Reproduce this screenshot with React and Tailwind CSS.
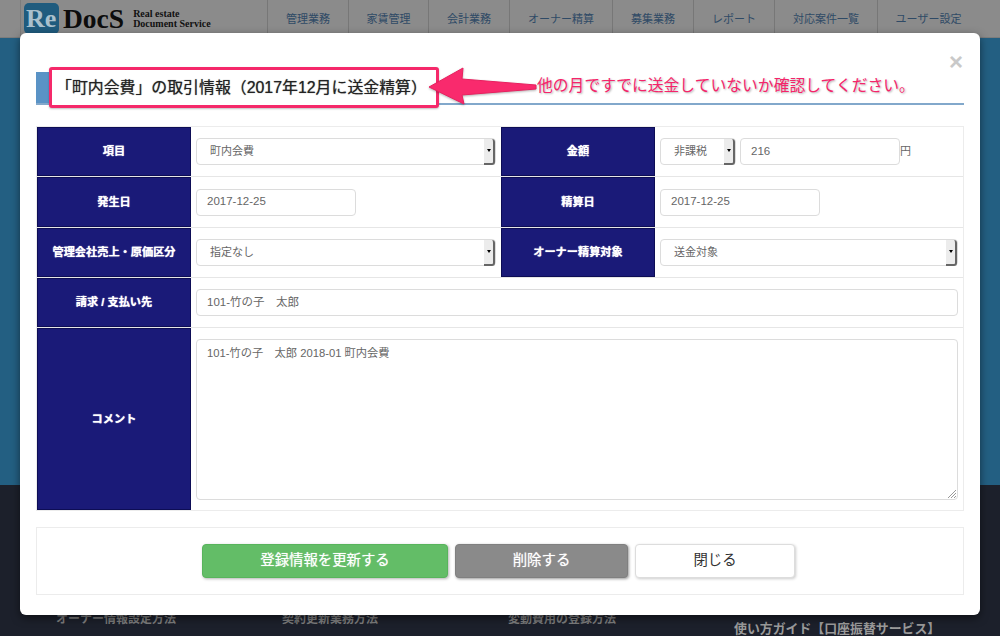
import React from 'react';

const font = { jp: "font-['Liberation_Sans','Noto_Sans_CJK_JP',sans-serif]" };

const navItems = [
  { label: '管理業務', w: 'w-[81px]' },
  { label: '家賃管理', w: 'w-[80px]' },
  { label: '会計業務', w: 'w-[81px]' },
  { label: 'オーナー精算', w: 'w-[103px]' },
  { label: '募集業務', w: 'w-[81px]' },
  { label: 'レポート', w: 'w-[81px]' },
  { label: '対応案件一覧', w: 'w-[103px]' },
  { label: 'ユーザー設定', w: 'w-[102px]' },
];

const footerCols = ['オーナー情報設定方法', '契約更新業務方法', '変動費用の登録方法'];

const Label = ({ children, w = 'w-[154px]' }) => (
  <div className={`${w} shrink-0 h-full bg-[#1a1a78] border border-[#0d0d55] flex items-center justify-center text-white text-[11.2px] font-bold [text-shadow:0_0_1px_#fff]`}>
    {children}
  </div>
);

const Field = ({ children, className = '' }) => (
  <div className={`h-[27px] bg-white border border-[#dcdcdc] rounded-[4px] flex items-center px-[10px] text-[11.5px] text-[#666] ${className}`}>
    {children}
  </div>
);

const Select = ({ children, className = '' }) => (
  <div className={`h-[27px] bg-white border border-[#dcdcdc] rounded-[4px] flex items-center justify-between pl-[13px] text-[11px] text-[#666] ${className}`}>
    <span>{children}</span>
    <span className="w-[11px] h-[26px] bg-[#ececec] border-r-2 border-b-2 border-[#666] rounded-r-[3px] flex items-center justify-center">
      <span className="w-0 h-0 border-x-[2.5px] border-x-transparent border-t-[3px] border-t-black" />
    </span>
  </div>
);

const Row = ({ children, className = '' }) => (
  <div className={`flex items-center border-b border-[#e6e6e6] ${className}`}>{children}</div>
);

const Cell = ({ children, className = '' }) => (
  <div className={`flex items-center pl-[5px] pr-[5px] ${className}`}>{children}</div>
);

const App = () => {
  return (
    <div className={`relative w-[1000px] h-[636px] overflow-hidden flex flex-col ${font.jp}`}>
      {/* page behind the dialog */}
      <header className="h-[38px] shrink-0 bg-[#8b8b8b] flex items-stretch pl-[20px] border-b border-[#7c7c7c]">
        <div className="w-[247px] shrink-0 flex items-start pt-[3px] pl-[3px] border-l border-[#7c7c7c]">
          <div className="w-[35px] h-[31px] shrink-0 bg-[#1f5b7e] rounded-[5px] text-[#a9c0cd] font-['Liberation_Serif',serif] font-bold text-[26px] leading-[32px] pl-[2px]">
            Re
          </div>
          <div className="font-['Liberation_Serif',serif] font-bold text-[27.5px] leading-[28px] text-[#0c0c0c] pl-[4px] pt-[2px]">DocS</div>
          <div className="font-['Liberation_Serif',serif] font-bold text-[10px] leading-[10px] text-[#111] pl-[9px] pt-[6px] whitespace-nowrap">
            Real estate<br />Document Service
          </div>
        </div>
        {navItems.map((item) => (
          <div key={item.label} className={`${item.w} shrink-0 border-l border-[#777] flex items-center justify-center text-[11px] text-[#2f4a66] pt-[1px]`}>
            {item.label}
          </div>
        ))}
      </header>
      <div className="h-[447px] shrink-0 bg-[#235f82]" />
      <footer className="flex-1 bg-[#1c202b] grid grid-cols-[226px_226px_226px_1fr] pl-[56px] pt-[127px] text-[12px] font-bold text-[#7d7d7d]">
        {footerCols.map((text) => (
          <div key={text} className="leading-[14px]">{text}</div>
        ))}
        <div className="text-[12.9px] text-[#9a9a9a] pt-[9px] leading-[15px] whitespace-nowrap">使い方ガイド【口座振替サービス】</div>
      </footer>

      {/* dialog */}
      <div className="absolute left-[20px] top-[33px] w-[960px] h-[582px] bg-white rounded-[6px] shadow-[0_3px_9px_rgba(0,0,0,0.5)] px-[16px] pt-[39px]">
        <div className="absolute right-[17px] top-[16px] text-[#c9c9c9] font-['Liberation_Sans',sans-serif] font-bold text-[24px] leading-[26px]">×</div>

        <div className="h-[33px] border-b-2 border-[#82a8cb] flex">
          <div className="w-[14px] bg-[#5a93c6]" />
        </div>

        <div className="mt-[21px] h-[385px] border border-[#ececec] flex flex-col">
          <Row className="h-[50px]">
            <Label>項目</Label>
            <Cell className="w-[310px]"><Select className="w-full">町内会費</Select></Cell>
            <Label>金額</Label>
            <Cell className="flex-1">
              <Select className="w-[76px] shrink-0">非課税</Select>
              <Field className="w-[160px] ml-[4px] shrink-0">216</Field>
              <span className="text-[11px] text-[#666]">円</span>
            </Cell>
          </Row>
          <Row className="h-[51px]">
            <Label>発生日</Label>
            <Cell className="w-[310px]"><Field className="w-[160px]">2017-12-25</Field></Cell>
            <Label>精算日</Label>
            <Cell className="flex-1"><Field className="w-[160px]">2017-12-25</Field></Cell>
          </Row>
          <Row className="h-[50px]">
            <Label>管理会社売上・原価区分</Label>
            <Cell className="w-[310px]"><Select className="w-full">指定なし</Select></Cell>
            <Label>オーナー精算対象</Label>
            <Cell className="flex-1"><Select className="w-full">送金対象</Select></Cell>
          </Row>
          <Row className="h-[50px]">
            <Label>請求 / 支払い先</Label>
            <Cell className="flex-1"><Field className="w-full">101-竹の子　太郎</Field></Cell>
          </Row>
          <div className="flex-1 flex items-center">
            <Label>コメント</Label>
            <Cell className="flex-1">
              <div className="relative w-full h-[161px] bg-white border border-[#dcdcdc] rounded-[4px] px-[10px] py-[5px] text-[11.25px] text-[#666]">
                101-竹の子　太郎 2018-01 町内会費
                <svg className="absolute right-[1px] bottom-[1px]" width="9" height="9" viewBox="0 0 9 9">
                  <path d="M1 9 9 1M4 9l5-5M7 9l2-2" stroke="#999" strokeWidth="1" />
                </svg>
              </div>
            </Cell>
          </div>
        </div>

        <div className="mt-[16px] h-[68px] border border-[#ececec] flex items-center pl-[165px] gap-[7px]">
          <div className="w-[246px] h-[34px] rounded-[4px] bg-[#63bd67] border border-[#58b45c] shadow-[1px_1px_3px_rgba(0,0,0,0.3)] flex items-center justify-center text-white text-[14.4px] [text-shadow:0_0_1px_rgba(255,255,255,0.7)]">
            登録情報を更新する
          </div>
          <div className="w-[173px] h-[34px] rounded-[4px] bg-[#8a8a8a] border border-[#808080] shadow-[1px_1px_3px_rgba(0,0,0,0.4)] flex items-center justify-center text-white text-[14.4px] [text-shadow:0_0_1px_rgba(255,255,255,0.7)]">
            削除する
          </div>
          <div className="w-[160px] h-[34px] rounded-[4px] bg-white border border-[#ddd] shadow-[1px_1px_3px_rgba(0,0,0,0.2)] flex items-center justify-center text-[#333] text-[14.4px]">
            閉じる
          </div>
        </div>
      </div>

      {/* annotation over the dialog */}
      <div className="absolute left-[49px] top-[67px] w-[390px] h-[41px] bg-white border-[3px] border-[#f5296a] rounded-[3px] shadow-[0_1px_2px_rgba(0,0,0,0.25)] flex items-center pl-[4px] text-[15.9px] text-[#222] whitespace-nowrap [text-shadow:0_0_1px_rgba(0,0,0,0.6)]">
        「町内会費」の取引情報（2017年12月に送金精算）
      </div>
      <svg className="absolute left-[425px] top-[60px] drop-shadow-[0_1px_1px_rgba(0,0,0,0.3)]" width="120" height="54" viewBox="0 0 120 54">
        <path d="M4 27 38 8 37 19 111 25 111 29 37 35 39 44Z" fill="#f92a6d" stroke="#e8205f" strokeWidth="1" strokeLinejoin="round" />
      </svg>
      <div className="absolute left-[537px] top-[75px] text-[15.8px] leading-[22px] text-[#f5246a] whitespace-nowrap [text-shadow:1px_1px_2px_rgba(0,0,0,0.3)]">
        他の月ですでに送金していないか確認してください。
      </div>
    </div>
  );
};

export default App;
